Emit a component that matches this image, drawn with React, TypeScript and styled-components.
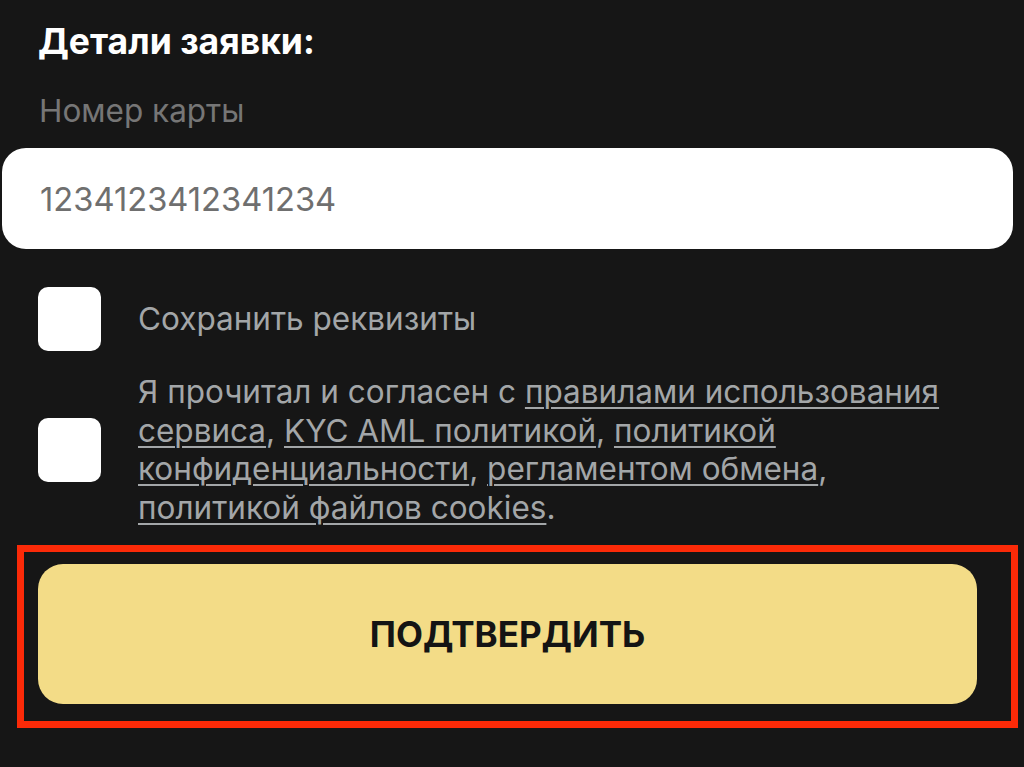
import styled, { createGlobalStyle } from "styled-components";

const GlobalStyle = createGlobalStyle`
  html, body {
    margin: 0;
    padding: 0;
    background: #161616;
  }
  body {
    font-family: Inter, "Liberation Sans", Arial, sans-serif;
    -webkit-font-smoothing: antialiased;
  }
  * {
    box-sizing: border-box;
  }
`;

const Page = styled.div`
  min-height: 100vh;
  background: #161616;
  padding: 22px 0 0 2px;
  display: flex;
  flex-direction: column;
`;

const Title = styled.h2`
  margin: 0 0 0 36px;
  font-size: 35.5px;
  line-height: 40px;
  font-weight: 700;
  color: #ffffff;
`;

const FieldLabel = styled.label`
  margin: 31px 0 0 37px;
  font-size: 31.5px;
  line-height: 36px;
  color: #767676;
`;

const CardInput = styled.input`
  margin-top: 19px;
  width: 1011px;
  height: 101px;
  border: none;
  outline: none;
  border-radius: 24px;
  background: #ffffff;
  padding: 0 0 0 38px;
  font-family: inherit;
  font-size: 32.7px;
  color: #6f6f6f;
`;

const CheckRow = styled.label<{ $top: number }>`
  display: flex;
  align-items: center;
  gap: 37px;
  margin: ${(p) => p.$top}px 0 0 36px;
  width: 925px;
  cursor: pointer;
`;

const Box = styled.span`
  flex: 0 0 auto;
  width: 63px;
  height: 64px;
  border-radius: 10px;
  background: #ffffff;
`;

const CheckText = styled.span`
  font-size: 31.5px;
  line-height: 38.5px;
  color: #a3a6a8;
`;

const Link = styled.a`
  color: inherit;
  text-decoration: underline;
  text-decoration-thickness: 2px;
  text-underline-offset: 4px;
`;

const Highlight = styled.div`
  margin: 18px 0 0 15px;
  width: 1001px;
  border: 7px solid #fb2a08;
  padding: 12px 34px 17px 14px;
`;

const SubmitButton = styled.button`
  display: flex;
  align-items: center;
  justify-content: center;
  width: 100%;
  height: 140px;
  border: none;
  border-radius: 25px;
  background: #f3dc87;
  font-family: inherit;
  font-size: 35px;
  font-weight: 700;
  color: #141414;
  cursor: pointer;
`;

export default function App() {
  return (
    <>
      <GlobalStyle />
      <Page>
        <Title>Детали заявки:</Title>
        <FieldLabel htmlFor="card">Номер карты</FieldLabel>
        <CardInput id="card" defaultValue="1234123412341234" />
        <CheckRow $top={38}>
          <Box />
          <CheckText>Сохранить реквизиты</CheckText>
        </CheckRow>
        <CheckRow $top={22}>
          <Box />
          <CheckText>
            Я прочитал и согласен с <Link href="#">правилами использования сервиса</Link>,{" "}
            <Link href="#">KYC AML политикой</Link>, <Link href="#">политикой конфиденциальности</Link>,{" "}
            <Link href="#">регламентом обмена</Link>, <Link href="#">политикой файлов cookies</Link>.
          </CheckText>
        </CheckRow>
        <Highlight>
          <SubmitButton>ПОДТВЕРДИТЬ</SubmitButton>
        </Highlight>
      </Page>
    </>
  );
}
